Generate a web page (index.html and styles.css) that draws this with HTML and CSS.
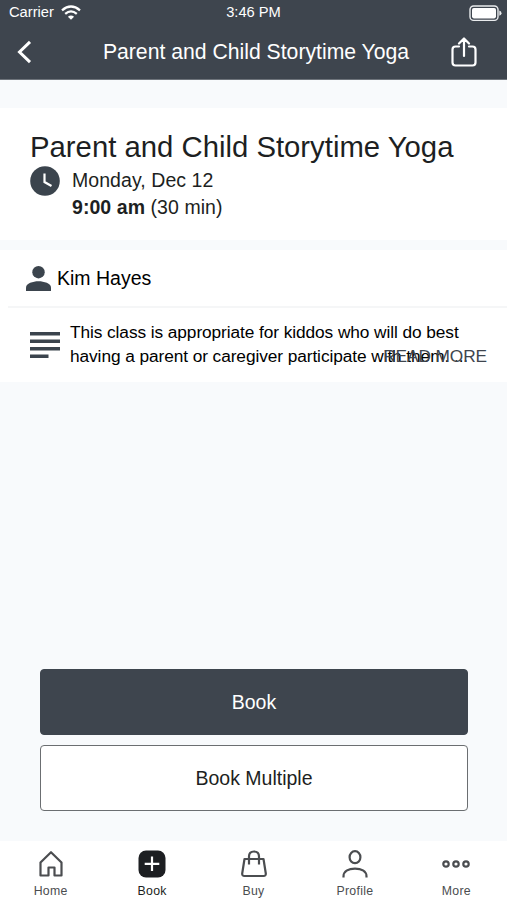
FILE: index.html
```html
<!DOCTYPE html>
<html lang="en">
<head>
<meta charset="utf-8">
<title>Parent and Child Storytime Yoga</title>
<link rel="stylesheet" href="styles.css">
</head>
<body>
<div class="app">
  <header class="header">
    <div class="status">
      <div class="status-left"><span>Carrier</span>
        <svg width="20" height="15" viewBox="0 0 20 15" fill="none" stroke="#fff" stroke-width="2.3"><path d="M1 5.3Q10-2.3 19 5.3M4.200 8.900Q10 3.900 15.800 8.900"/><path d="M6.900 11.800Q10 9.200 13.100 11.800L10 14.800Z" fill="#fff" stroke="none"/></svg>
      </div>
      <span class="time">3:46 PM</span>
      <svg class="battery" width="33" height="17" viewBox="0 0 33 17"><rect x="1" y="1" width="28" height="14.400" rx="3.600" fill="none" stroke="#e9ebed" stroke-width="1.400"/><rect x="3" y="3" width="24" height="10.400" rx="1.800" fill="#fff"/><path d="M30.300 5.600Q32.500 6.300 32.500 8.200T30.300 10.800Z" fill="#e9ebed"/></svg>
    </div>
    <div class="nav">
      <svg width="16" height="24" viewBox="0 0 16 24" fill="none" stroke="#fff" stroke-width="3"><path d="M14 1.800 3.500 12l10.500 10.200"/></svg>
      <h1 class="nav-title">Parent and Child Storytime Yoga</h1>
      <svg width="26" height="31" viewBox="0 0 26 31" fill="none" stroke="#fff" stroke-width="2.200" stroke-linecap="round" stroke-linejoin="round"><path d="M8 9.500H4.500Q1.500 9.500 1.500 12.500V25.500Q1.500 28.500 4.500 28.500H21.500Q24.500 28.500 24.500 25.500V12.500Q24.500 9.500 21.500 9.500H18M13 19V2M8 6.500l5-5 5 5"/></svg>
    </div>
  </header>
  <main class="content">
    <section class="summary">
      <h2 class="title">Parent and Child Storytime Yoga</h2>
      <div class="when">
        <svg width="30" height="30" viewBox="0 0 30 30"><circle cx="15" cy="15" r="14.800" fill="#3b444d"/><path d="M14.500 7.500v8.500l7 4" fill="none" stroke="#fff" stroke-width="2.200"/></svg>
        <div class="when-text"><div class="date">Monday, Dec 12</div><div class="hour"><b>9:00 am</b> (30 min)</div></div>
      </div>
    </section>
    <section class="details">
      <div class="teacher">
        <svg width="25" height="25" viewBox="0 0 25 25" fill="#3b444d"><circle cx="12.500" cy="6.200" r="6.200"/><path d="M0 25V21.500C0 17.500 7 15.300 12.500 15.300S25 17.500 25 21.500V25Z"/></svg>
        <span>Kim Hayes</span>
      </div>
      <div class="about">
        <svg width="30" height="27" viewBox="0 0 30 27" fill="#3b444d"><path d="M0 0h30v3.500H0zM0 7.500h30V11H0zM0 15h30v3.500H0zM0 22.500h18.500V26H0z"/></svg>
        <p class="desc">This class is appropriate for kiddos who will do best<br>having a parent or caregiver participate with them. ...</p>
        <span class="read-more">READ MORE</span>
      </div>
    </section>
    <div class="actions">
      <button class="btn primary">Book</button>
      <button class="btn">Book Multiple</button>
    </div>
  </main>
  <nav class="tabs">
    <div class="tab"><svg width="30" height="30" viewBox="0 0 30 30"><path d="M4.500 26.500V13.500L15 3.200 25.500 13.500V26.500H18.500V18.500H12.500V26.500Z"/></svg><span>Home</span></div>
    <div class="tab active"><svg width="30" height="30" viewBox="0 0 30 30"><rect x="1.500" y="1.500" width="27" height="27" rx="7.500" fill="#1d1f22" stroke="none"/><path d="M15 7.500v14.500M7.700 14.800h14.600" stroke="#fff"/></svg><span>Book</span></div>
    <div class="tab"><svg width="30" height="30" viewBox="0 0 30 30"><path d="M5.500 10h19l2.300 14.500q.2 2.500-2.300 2.500h-19q-2.500 0-2.300-2.500zM10 15.500V7.500Q10 2.500 15 2.500T20 7.500V15.500"/></svg><span>Buy</span></div>
    <div class="tab"><svg width="30" height="30" viewBox="0 0 30 30"><ellipse cx="15" cy="8.200" rx="5.400" ry="6"/><path d="M3.500 28.500V27.500C3.500 22 9 19.700 15 19.700S26.500 22 26.500 27.500V28.500"/></svg><span>Profile</span></div>
    <div class="tab"><svg width="30" height="30" viewBox="0 0 30 30"><circle cx="5" cy="15" r="2.700"/><circle cx="15" cy="15" r="2.700"/><circle cx="25" cy="15" r="2.700"/></svg><span>More</span></div>
  </nav>
</div>
</body>
</html>
```
FILE: styles.css
```css
* { box-sizing: border-box; }
body, h1, h2, p { margin: 0; font-weight: 400; }
body { font-family: "Liberation Sans", Arial, sans-serif; color: #1d1f22; }
svg { display: block; flex: none; }
.app { height: 900px; display: flex; flex-direction: column; background: #f8fafc; overflow: hidden; }
.header { height: 80px; flex: none; background: #3e454e; color: #fff; border-bottom: 1px solid #6e747b; }
.status { height: 25px; padding: 0 5px 0 9px; display: grid; grid-template-columns: 1fr auto 1fr; align-items: center; font-size: 14.7px; line-height: 25px; }
.status-left { display: flex; align-items: center; gap: 7px; }
.time { margin-right: 4px; }
.battery { justify-self: end; margin-top: 1px; }
.nav { height: 54px; padding: 0 30px 0 16px; display: flex; align-items: center; justify-content: space-between; }
.nav-title { font-size: 21.2px; line-height: 54px; margin-left: 29px; }
.content { flex: 1; display: flex; flex-direction: column; padding-top: 28px; }
.summary { height: 132px; flex: none; background: #fff; padding: 21px 30px 0; }
.title { font-size: 29.3px; line-height: 36px; white-space: nowrap; }
.when { display: flex; gap: 12px; padding-top: 1px; }
.when-text { font-size: 19.5px; line-height: 27px; margin-top: 1px; letter-spacing: .06px; }
.details { margin-top: 10px; height: 132px; flex: none; background: #fff; color: #000; }
.teacher { height: 58px; margin-left: 8px; padding-left: 18px; display: flex; align-items: center; gap: 6px; border-bottom: 2px solid #f5f6f7; font-size: 19.5px; }
.about { position: relative; height: 74px; display: flex; align-items: center; gap: 10px; padding-left: 30px; }
.desc { font-size: 17.3px; line-height: 24px; letter-spacing: -.08px; margin-top: -2px; white-space: nowrap; }
.read-more { position: absolute; right: 20px; top: 36px; font-size: 17.3px; line-height: 24px; letter-spacing: -.1px; color: #3e454e; }
.actions { margin: auto 39px 30px 40px; display: flex; flex-direction: column; gap: 10px; }
.btn { height: 66px; border: 1px solid #6b6e71; border-radius: 4px; background: #fff; color: #1d1f22; font: 19.5px "Liberation Sans", Arial, sans-serif; }
.primary { background: #3e454e; border-color: #3e454e; color: #fff; }
.tabs { height: 59px; flex: none; background: #fff; display: flex; }
.tab { flex: 1; display: flex; flex-direction: column; align-items: center; gap: 5px; padding-top: 8px; font-size: 12.3px; line-height: 15px; letter-spacing: .3px; color: #4b4d50; }
.tab svg { fill: none; stroke: #4b4d50; stroke-width: 2.2; stroke-linejoin: round; }
.active { color: #1d1f22; }
```
